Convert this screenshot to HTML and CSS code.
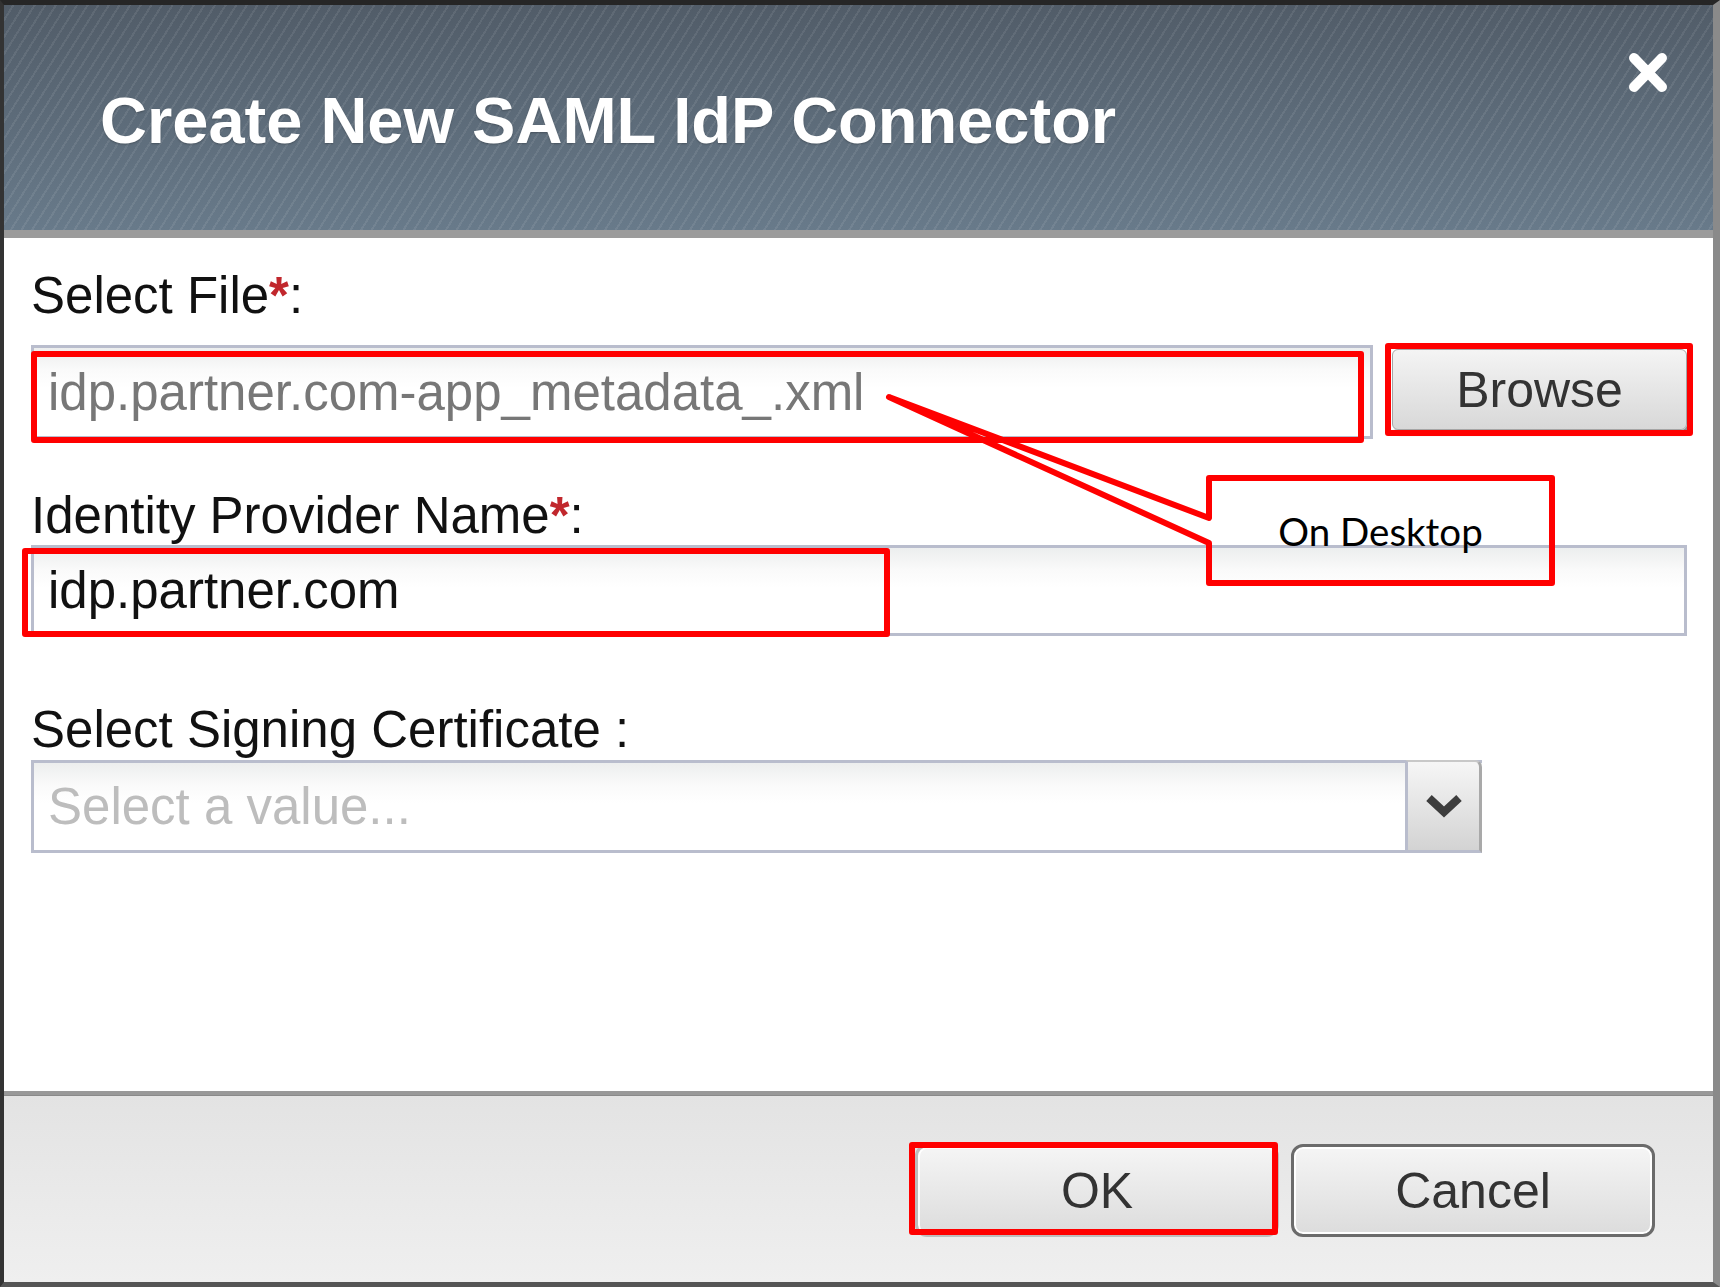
FILE: index.html
```html
<!DOCTYPE html>
<html lang="en">
<head>
<meta charset="utf-8">
<title>Create New SAML IdP Connector</title>
<link rel="stylesheet" href="styles.css">
</head>
<body>
<div class="dialog">
  <div class="dlg-header">
    <h1 class="dlg-title">Create New SAML IdP Connector</h1>
    <div class="dlg-close" aria-label="Close">
      <svg width="40" height="41" viewBox="0 0 40 41"><path d="M6 6 L34 35 M34 6 L6 35" stroke="#fff" stroke-width="10" stroke-linecap="round" fill="none"/></svg>
    </div>
  </div>
  <div class="dlg-body">
    <div class="label l1">Select File<span class="req">*</span>:</div>
    <div class="file-row">
      <div class="field file-field"><span class="file-text">idp.partner.com-app_metadata_.xml</span></div>
      <div class="btn browse">Browse</div>
    </div>
    <div class="label l2">Identity Provider Name<span class="req">*</span>:</div>
    <div class="field name-field"><span class="name-text">idp.partner.com</span></div>
    <div class="label l3">Select Signing Certificate :</div>
    <div class="field select-field">
      <span class="placeholder">Select a value...</span>
      <div class="select-btn">
        <svg width="40" height="26" viewBox="0 0 40 26"><polyline points="5,5 20,19 35,5" stroke="#3d3d3d" stroke-width="8" fill="none" stroke-linejoin="miter"/></svg>
      </div>
    </div>
  </div>
  <div class="dlg-footer">
    <div class="btn fbtn">OK</div>
    <div class="btn fbtn cancel">Cancel</div>
  </div>
</div>

<div class="mark mark-file"></div>
<div class="mark mark-browse"></div>
<div class="mark mark-name"></div>
<div class="mark mark-ok"></div>

<svg class="callout" width="1720" height="1287" viewBox="0 0 1720 1287">
  <path d="M1209,518 L1209,478 L1552,478 L1552,583 L1209,583 L1209,543 L889,397 Z" fill="none" stroke="#ff0000" stroke-width="6" stroke-linejoin="round"/>
</svg>
<div class="callout-text">On Desktop</div>
</body>
</html>
```
FILE: styles.css
```css
html, body {
  margin: 0;
  padding: 0;
}
body {
  position: relative;
  width: 1720px;
  height: 1287px;
  overflow: hidden;
  background: #fff;
  font-family: "Liberation Sans", Arial, sans-serif;
}
.dialog {
  box-sizing: border-box;
  width: 1720px;
  height: 1287px;
  border-left: 4px solid #333;
  border-right: 7px solid #8a8a8a;
  border-top: 5px solid #262626;
  border-bottom: 5px solid #555;
  display: flex;
  flex-direction: column;
  background: #fff;
}
.dlg-header {
  box-sizing: border-box;
  height: 233px;
  flex: none;
  border-bottom: 8px solid #9b9b9b;
  display: flex;
  justify-content: space-between;
  align-items: flex-start;
  padding: 0 45px 0 96px;
  background:
    repeating-linear-gradient(122deg, rgba(255,255,255,0) 0px, rgba(255,255,255,0) 7px, rgba(255,255,255,0.08) 7px, rgba(255,255,255,0.08) 9px),
    linear-gradient(#515c68, #687a8a);
}
.dlg-title {
  margin: 78px 0 0 0;
  font-size: 65px;
  line-height: 75px;
  font-weight: bold;
  color: #fff;
  text-shadow: 0 1px 2px rgba(0,0,0,0.25);
}
.dlg-close {
  margin-top: 47px;
  width: 40px;
  height: 41px;
}
.dlg-close svg {
  display: block;
}
.dlg-body {
  flex: 1;
  padding: 29px 0 0 27px;
}
.label {
  font-size: 51px;
  line-height: 57px;
  color: #111;
  white-space: nowrap;
}
.req {
  color: #c1272d;
  font-weight: bold;
}
.l2 { margin-top: 48px; }
.l3 { margin-top: 65px; }
.file-row {
  margin-top: 21px;
  display: flex;
  align-items: flex-start;
  gap: 19px;
}
.field {
  box-sizing: border-box;
  border: 3px solid #b9bdcd;
  background: linear-gradient(#eceeee 0px, #fafafa 22px, #fff 40px);
  display: flex;
  align-items: center;
  font-size: 51px;
  white-space: nowrap;
}
.file-field {
  width: 1342px;
  height: 94px;
  padding-left: 14px;
  color: #777;
}
.name-field {
  margin-top: 1px;
  width: 1656px;
  height: 91px;
  padding-left: 14px;
  color: #111;
}
.select-field {
  margin-top: 2px;
  width: 1451px;
  height: 93px;
  padding-left: 14px;
  border-right: none;
  justify-content: space-between;
}
.placeholder {
  color: #bdbdbd;
}
.select-btn {
  box-sizing: border-box;
  align-self: stretch;
  margin-top: -3px;
  margin-bottom: -3px;
  width: 77px;
  border-left: 3px solid #b9bdcd;
  border-right: 3px solid #a9a9a9;
  border-top: 2px solid #c8c8c8;
  border-bottom: 3px solid #b9bdcd;
  border-top-right-radius: 7px;
  background: linear-gradient(#f6f6f6, #d3d3d3);
  display: flex;
  align-items: center;
  justify-content: center;
}
.select-btn svg {
  display: block;
}
.btn {
  box-sizing: border-box;
  display: flex;
  align-items: center;
  justify-content: center;
  color: #333;
  font-size: 50px;
  background: linear-gradient(#f4f4f4, #d8d8d8);
}
.browse {
  margin-top: 4px;
  width: 295px;
  height: 81px;
  border: 1px solid #a5a5a5;
  border-radius: 6px;
  box-shadow: 3px 5px 2px #8c8c8c;
}
.dlg-footer {
  box-sizing: border-box;
  height: 191px;
  flex: none;
  border-top: 4px solid #999;
  box-shadow: inset 0 1px 0 #8a8a8a;
  background: linear-gradient(#e3e3e3, #efefef);
  display: flex;
  justify-content: flex-end;
  align-items: flex-start;
  gap: 12px;
  padding: 49px 58px 0 0;
}
.fbtn {
  width: 364px;
  height: 93px;
  border: 3px solid #bdbdbd;
  border-radius: 12px;
  box-shadow: inset 0 0 0 2px #fff;
  background: linear-gradient(#f5f5f5, #dcdcdc);
}
.cancel {
  border-color: #6b6b6b;
}
.mark {
  position: absolute;
  box-sizing: border-box;
  border: 6px solid #ff0000;
  border-radius: 3px;
}
.mark-file { left: 31px; top: 351px; width: 1333px; height: 92px; }
.mark-browse { left: 1385px; top: 343px; width: 308px; height: 93px; }
.mark-name { left: 22px; top: 548px; width: 868px; height: 89px; }
.mark-ok { left: 909px; top: 1142px; width: 369px; height: 93px; }
.callout {
  position: absolute;
  left: 0;
  top: 0;
  pointer-events: none;
}
.callout-text {
  position: absolute;
  left: 1209px;
  top: 478px;
  width: 343px;
  height: 105px;
  display: flex;
  align-items: center;
  justify-content: center;
  font-family: Lato, "Open Sans", sans-serif;
  font-size: 38.5px;
  color: #000;
  padding-top: 1px;
  box-sizing: border-box;
}
```
